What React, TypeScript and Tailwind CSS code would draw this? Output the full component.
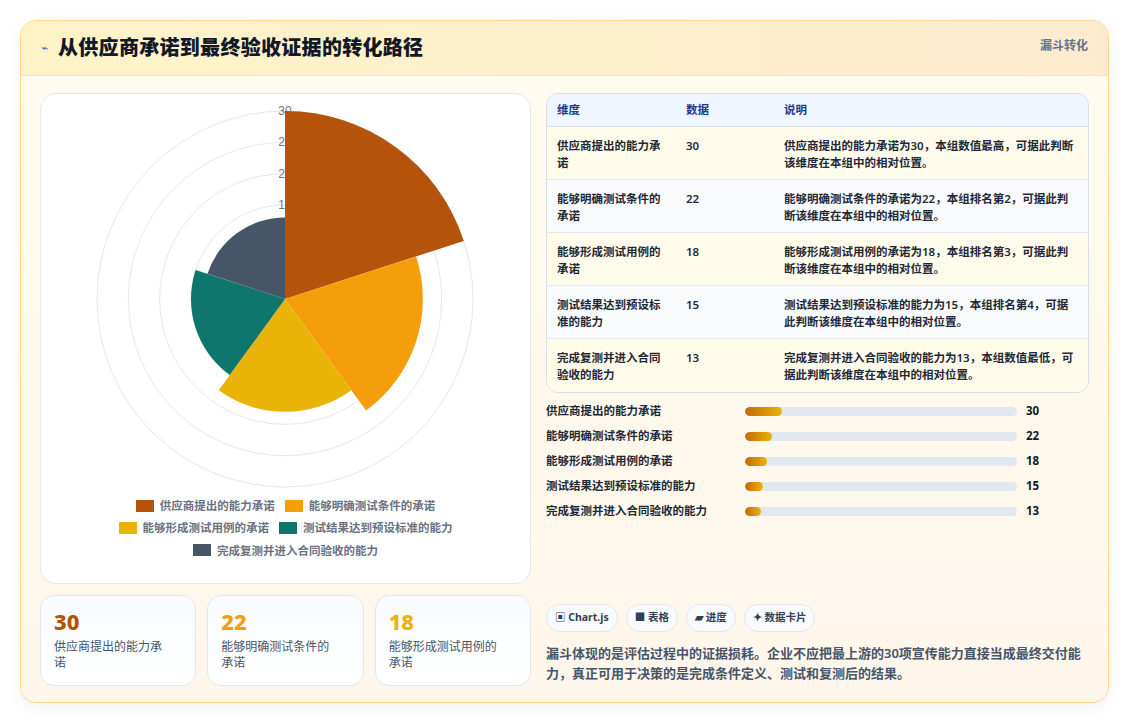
import React from "react";

const data = [
  { n: "供应商提出的能力承诺", v: 30, c: "#b45309", d: "供应商提出的能力承诺为30，本组数值最高，可据此判断该维度在本组中的相对位置。" },
  { n: "能够明确测试条件的承诺", v: 22, c: "#f59e0b", d: "能够明确测试条件的承诺为22，本组排名第2，可据此判断该维度在本组中的相对位置。" },
  { n: "能够形成测试用例的承诺", v: 18, c: "#eab308", d: "能够形成测试用例的承诺为18，本组排名第3，可据此判断该维度在本组中的相对位置。" },
  { n: "测试结果达到预设标准的能力", v: 15, c: "#0f766e", d: "测试结果达到预设标准的能力为15，本组排名第4，可据此判断该维度在本组中的相对位置。" },
  { n: "完成复测并进入合同验收的能力", v: 13, c: "#475569", d: "完成复测并进入合同验收的能力为13，本组数值最低，可据此判断该维度在本组中的相对位置。" },
];

const tableNames = [
  ["供应商提出的能力承", "诺"],
  ["能够明确测试条件的", "承诺"],
  ["能够形成测试用例的", "承诺"],
  ["测试结果达到预设标", "准的能力"],
  ["完成复测并进入合同", "验收的能力"],
];

function Polar() {
  const cx = 245, cy = 205, R = 188;
  const sect = (i: number, v: number) => {
    const r = (v / 30) * R;
    const a0 = ((-90 + i * 72) * Math.PI) / 180;
    const a1 = ((-90 + (i + 1) * 72) * Math.PI) / 180;
    const x0 = cx + r * Math.cos(a0), y0 = cy + r * Math.sin(a0);
    const x1 = cx + r * Math.cos(a1), y1 = cy + r * Math.sin(a1);
    return `M${cx},${cy} L${x0},${y0} A${r},${r} 0 0 1 ${x1},${y1} Z`;
  };
  return (
    <svg width="491" height="400" className="block">
      {[5, 10, 15, 20, 25, 30].map((t) => (
        <circle key={t} cx={cx} cy={cy} r={(t / 30) * R} fill="none" stroke="#e5e7eb" strokeWidth="1" />
      ))}
      {[10, 15, 20, 25, 30].map((t) => (
        <text key={t} x={cx} y={cy - (t / 30) * R + 4} textAnchor="middle" fontSize="12" fill="#6b7280" fontFamily="Liberation Sans, sans-serif">{t}</text>
      ))}
      {data.map((d, i) => (
        <path key={i} d={sect(i, d.v)} fill={d.c} />
      ))}
    </svg>
  );
}

export default function App() {
  const font = { fontFamily: "'Noto Sans', 'Noto Sans CJK SC', sans-serif" };
  return (
    <div className="w-[1129px] h-[724px] bg-white p-[20px] pb-[21px]" style={font}>
      <div className="h-full rounded-[16px] border border-[#fcd98a] bg-[#fffaf0] overflow-hidden flex flex-col shadow-[0_4px_16px_rgba(0,0,0,0.06)]">
        <div className="h-[55px] shrink-0 flex items-center justify-between px-5 bg-gradient-to-r from-[#fef3c7] to-[#fdebd0] border-b border-[#ede4cc]">
          <div className="flex items-center gap-[10px]">
            <span className="text-[#4f6bd8] text-[12px]">⌁</span>
            <span className="text-[20px] font-extrabold text-[#111827] tracking-[0.3px]">从供应商承诺到最终验收证据的转化路径</span>
          </div>
          <span className="text-[12px] font-bold text-[#64748b] self-start mt-[16px]">漏斗转化</span>
        </div>
        <div className="flex-1 flex gap-[15px] px-[19px] pt-[17px] bg-gradient-to-b from-[#fffbef] to-[#fef6ea]">
          <div className="w-[491px] flex flex-col">
            <div className="h-[491px] rounded-[16px] border border-[#e5e7eb] bg-white flex flex-col items-center">
              <Polar />
              <div className="mt-[3px] flex flex-col items-center gap-[5px] text-[11.5px] font-bold text-[#6b7280]">
                <div className="flex gap-[10px]">
                  {data.slice(0, 2).map((d) => (
                    <span key={d.n} className="flex items-center gap-[6px]"><span className="w-[18px] h-[12px]" style={{ background: d.c }} />{d.n}</span>
                  ))}
                </div>
                <div className="flex gap-[10px]">
                  {data.slice(2, 4).map((d) => (
                    <span key={d.n} className="flex items-center gap-[6px]"><span className="w-[18px] h-[12px]" style={{ background: d.c }} />{d.n}</span>
                  ))}
                </div>
                <div className="flex gap-[10px]">
                  <span className="flex items-center gap-[6px]"><span className="w-[18px] h-[12px]" style={{ background: data[4].c }} />{data[4].n}</span>
                </div>
              </div>
            </div>
            <div className="mt-[11px] grid grid-cols-3 gap-[11px]">
              {data.slice(0, 3).map((d) => (
                <div key={d.n} className="h-[91px] rounded-[14px] border border-[#dfe7f1] bg-gradient-to-b from-[#f8fbff] to-white pl-[13px] pr-[22px] pt-[10px]">
                  <div className="text-[22px] font-extrabold leading-[30px]" style={{ color: d.c }}>{d.v}</div>
                  <div className="text-[12px] text-[#475569] leading-[16px] mt-[3px]">{d.n}</div>
                </div>
              ))}
            </div>
          </div>
          <div className="flex-1 flex flex-col">
            <div className="rounded-[12px] border border-[#d7dee8] overflow-hidden text-[11.5px] text-[#1f2937]">
              <div className="h-[33px] flex items-center bg-[#eff6ff] border-b border-[#d7dee8] text-[#1e3a8a] font-semibold">
                <div className="w-[139px] pl-[10px]">维度</div>
                <div className="w-[98px]">数据</div>
                <div className="flex-1">说明</div>
              </div>
              {data.map((d, i) => (
                <div key={d.n} className={`h-[53px] flex pt-[10px] leading-[17px] font-semibold ${i % 2 ? "bg-[#f8fafc]" : "bg-[#fffbeb]"} ${i < 4 ? "border-b border-[#e2e8f0]" : ""}`}>
                  <div className="w-[139px] pl-[10px] pr-[8px]">{tableNames[i][0]}<br />{tableNames[i][1]}</div>
                  <div className="w-[98px]">{d.v}</div>
                  <div className="flex-1 pr-[14px]">{d.d}</div>
                </div>
              ))}
            </div>
            <div className="mt-[9px] flex flex-col gap-[7px] text-[11.5px] font-semibold text-[#1f2937]">
              {data.map((d) => (
                <div key={d.n} className="h-[18px] flex items-center">
                  <div className="w-[199px]">{d.n}</div>
                  <div className="w-[272px] h-[9px] rounded-full bg-[#e2e8f0] overflow-hidden">
                    <div className="h-full rounded-full bg-gradient-to-r from-[#c26a05] to-[#eab308]" style={{ width: `${(d.v / 30) * 13.5}%` }} />
                  </div>
                  <div className="ml-[9px] font-bold text-[#111827]">{d.v}</div>
                </div>
              ))}
            </div>
            <div className="mt-[84px] flex gap-[8px] text-[10.5px] font-bold text-[#334155]">
              {["▣ Chart.js", "■ 表格", "▰ 进度", "✦ 数据卡片"].map((t) => (
                <span key={t} className="h-[28px] px-[8px] flex items-center rounded-full border border-[#e2e8f0] bg-[#f8fafc]">{t}</span>
              ))}
            </div>
            <p className="mt-[11px] text-[13px] leading-[20px] font-semibold text-[#475569]">漏斗体现的是评估过程中的证据损耗。企业不应把最上游的30项宣传能力直接当成最终交付能力，真正可用于决策的是完成条件定义、测试和复测后的结果。</p>
          </div>
        </div>
      </div>
    </div>
  );
}
